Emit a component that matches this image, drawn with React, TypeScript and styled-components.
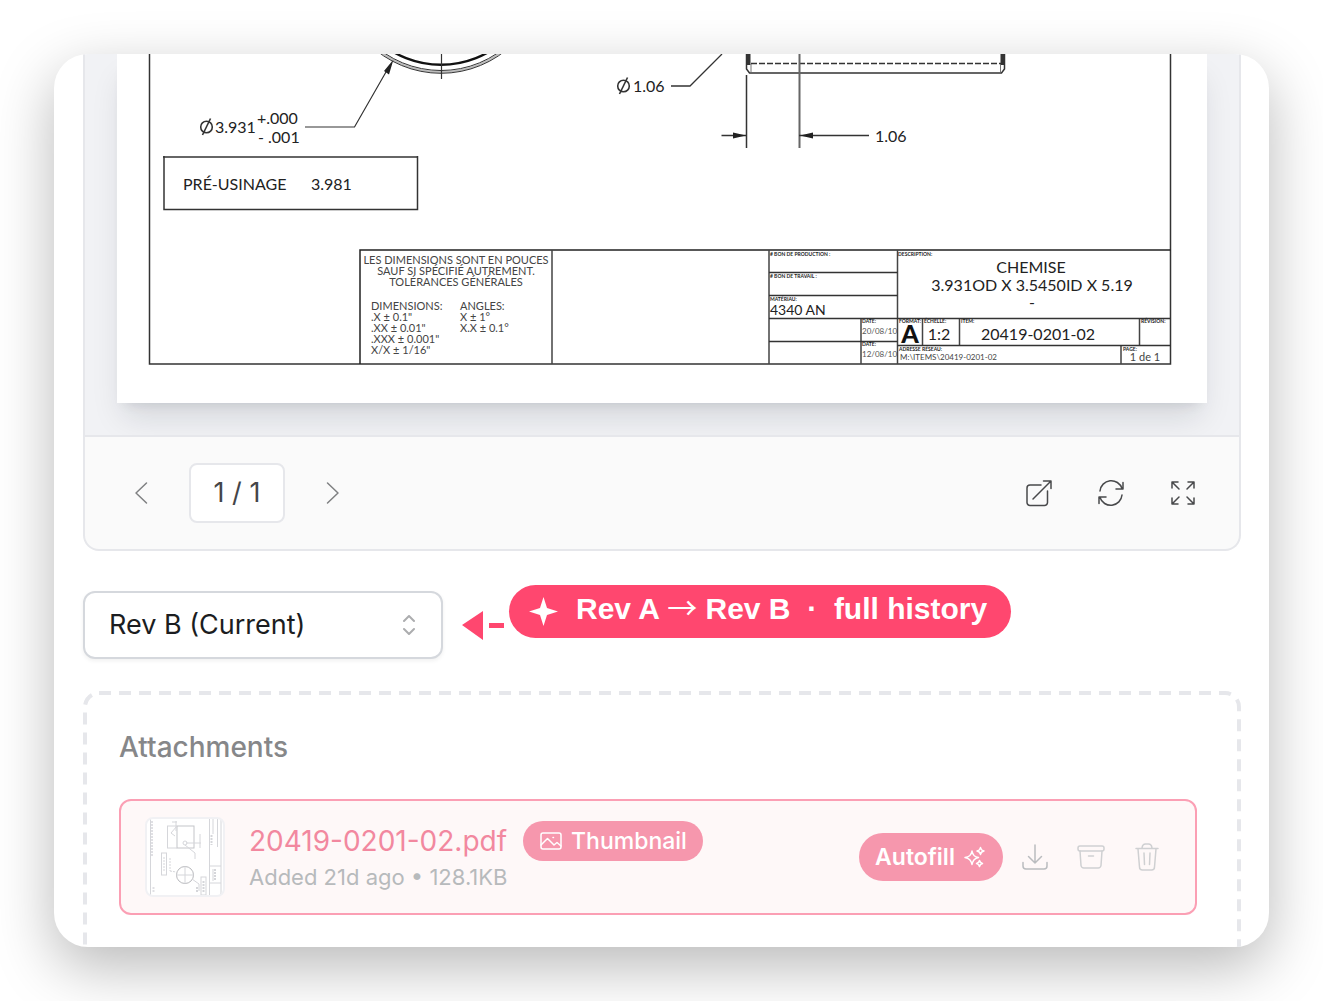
import React from "react";
import styled, { createGlobalStyle } from "styled-components";

const GlobalStyle = createGlobalStyle`
  *, *::before, *::after { box-sizing: border-box; }
  body {
    margin: 0;
    background: #fff;
    font-family: Inter, "Open Sans", sans-serif;
    color: #1b1d21;
  }
  button, select { font: inherit; color: inherit; }
`;

const Page = styled.main`
  padding: 54px;
`;

const Card = styled.section`
  padding: 0 28px 0 29px;
  border-radius: 34px;
  background: #fff;
  box-shadow: 0 20px 60px rgba(0, 0, 0, 0.28);
  overflow: hidden;
`;

const Viewer = styled.section`
  border: 2px solid #e6e7eb;
  border-top: 0;
  border-radius: 0 0 16px 16px;
  background: #fafafa;
  overflow: hidden;
`;

const Stage = styled.div`
  padding: 0 32px 32px;
  background: #f1f2f5;
  overflow: hidden;
`;

const Sheet = styled.svg`
  display: block;
  width: 100%;
  height: auto;
  background: #fff;
  box-shadow: 0 20px 30px -6px rgba(15, 23, 42, 0.12), 0 8px 12px -8px rgba(15, 23, 42, 0.12);
  font-family: Lato, "Open Sans", sans-serif;
  fill: #222;
`;

const Toolbar = styled.div`
  display: flex;
  align-items: center;
  justify-content: space-between;
  padding: 26px 32px;
  border-top: 2px solid #e6e7eb;
`;

const Group = styled.div<{ $gap: number }>`
  display: flex;
  align-items: center;
  gap: ${(p) => p.$gap}px;
`;

const IconButton = styled.button<{ $tone: string }>`
  display: grid;
  place-items: center;
  width: 48px;
  height: 48px;
  padding: 0;
  border: 0;
  background: none;
  color: ${(p) => p.$tone};
  cursor: pointer;
`;

const Icon = styled.svg`
  display: block;
  flex: none;
  fill: none;
  stroke: currentColor;
  stroke-width: 2;
  stroke-linecap: round;
  stroke-linejoin: round;
`;

const ThinIcon = styled(Icon)`
  stroke-width: 1.5;
`;

const PageCount = styled.output`
  display: grid;
  place-items: center;
  width: 96px;
  height: 60px;
  border: 2px solid #e6e7eb;
  border-radius: 8px;
  background: #fff;
  color: #444548;
  font-size: 27px;
  line-height: 40px;
`;

const RevisionRow = styled.div`
  display: flex;
  align-items: center;
  margin: 40px 0 32px;
`;

const SelectWrap = styled.label`
  position: relative;
  width: 360px;
  color: #acadaf;
`;

const Select = styled.select`
  display: block;
  width: 100%;
  height: 68px;
  padding: 0 56px 0 24px;
  border: 2px solid #d5d8dd;
  border-radius: 12px;
  appearance: none;
  background: #fff;
  box-shadow: 0 2px 4px rgba(0, 0, 0, 0.06);
  color: #1b1d21;
  font-size: 27px;
  line-height: 40px;
`;

const SelectIcon = styled(Icon)`
  position: absolute;
  top: 24px;
  right: 26px;
  pointer-events: none;
`;

const CalloutArrow = styled.svg`
  display: block;
  margin: 0 5px 0 19px;
  fill: #ff476f;
`;

const Callout = styled.p`
  display: flex;
  align-self: flex-start;
  align-items: center;
  gap: 18px;
  height: 53px;
  margin: -6px 0 0;
  padding: 0 24px 0 20px;
  border-radius: 27px;
  background: #ff476f;
  color: #fff;
  font: bold 30px/48px "Liberation Sans", "DejaVu Sans", sans-serif;
  white-space: pre;
`;

const CalloutText = styled.span`
  height: 53px;
`;

const LongArrow = styled.span`
  font-family: "Noto Sans CJK JP", sans-serif;
  font-weight: 400;
  line-height: 1;
`;

const Attachments = styled.section`
  position: relative;
  padding: 36px 44px 32px 36px;
  overflow: hidden;
`;

const DashedOutline = styled.svg`
  position: absolute;
  inset: 0;
  width: 100%;
  height: 100%;
  overflow: visible;
  pointer-events: none;

  rect {
    width: calc(100% - 4px);
    height: calc(100% + 32px);
    fill: none;
    stroke: #e6e7eb;
    stroke-width: 4;
    stroke-dasharray: 12 8;
  }
`;

const Heading = styled.h2`
  margin: 0 0 32px;
  color: #868789;
  font-size: 28px;
  font-weight: 500;
  line-height: 40px;
`;

const FileRow = styled.article`
  display: flex;
  align-items: center;
  gap: 24px;
  padding: 16px 24px;
  border: 2px solid #fb9fb4;
  border-radius: 12px;
  background: #fef8f8;
`;

const Thumb = styled.svg`
  display: block;
  flex: none;
  width: 80px;
  height: 80px;
  border: 2px solid #f1f1f4;
  border-radius: 8px;
  background: #fff;
`;

const FileText = styled.div`
  flex: 1;
  min-width: 0;
`;

const FileLink = styled.a`
  color: #f2889f;
  font-size: 28px;
  line-height: 40px;
  text-decoration: none;
`;

const FileMeta = styled.p`
  margin: 0;
  color: #b7babc;
  font-size: 22px;
  line-height: 32px;
`;

const Badge = styled.span`
  display: inline-flex;
  align-items: center;
  gap: 8px;
  height: 40px;
  padding: 0 16px;
  border-radius: 20px;
  background: #f697ad;
  color: #fff;
  font-size: 23px;
  font-weight: 500;
`;

const AutofillButton = styled.button`
  display: flex;
  align-items: center;
  justify-content: center;
  gap: 8px;
  width: 144px;
  height: 48px;
  padding: 0;
  border: 0;
  border-radius: 24px;
  background: #f697ad;
  color: #fff;
  font-size: 23px;
  font-weight: 600;
  cursor: pointer;
`;

type Label = {
  x: number;
  y: number;
  size: number;
  text: string;
  anchor?: "middle";
  fill?: string;
  weight?: number;
};

const labels: Label[] = [
  { x: 215, y: 133, size: 16, text: "3.931" },
  { x: 257, y: 124, size: 16, text: "+.000" },
  { x: 258, y: 143, size: 16, text: "- .001" },
  { x: 183, y: 190, size: 16, text: "PRÉ-USINAGE" },
  { x: 311, y: 190, size: 16, text: "3.981" },
  { x: 633, y: 92, size: 16, text: "1.06" },
  { x: 875, y: 142, size: 16, text: "1.06" },
  { x: 456, y: 264, size: 11, text: "LES DIMENSIONS SONT EN POUCES", anchor: "middle", fill: "#444" },
  { x: 456, y: 275, size: 11, text: "SAUF SI SPÉCIFIÉ AUTREMENT.", anchor: "middle", fill: "#444" },
  { x: 456, y: 286, size: 11, text: "TOLÉRANCES GÉNÉRALES", anchor: "middle", fill: "#444" },
  { x: 371, y: 310, size: 11, text: "DIMENSIONS:", fill: "#444" },
  { x: 371, y: 321, size: 11, text: ".X ± 0.1\"", fill: "#444" },
  { x: 371, y: 332, size: 11, text: ".XX ± 0.01\"", fill: "#444" },
  { x: 371, y: 343, size: 11, text: ".XXX ± 0.001\"", fill: "#444" },
  { x: 371, y: 354, size: 11, text: "X/X ± 1/16\"", fill: "#444" },
  { x: 460, y: 310, size: 11, text: "ANGLES:", fill: "#444" },
  { x: 460, y: 321, size: 11, text: "X ± 1°", fill: "#444" },
  { x: 460, y: 332, size: 11, text: "X.X ± 0.1°", fill: "#444" },
  { x: 770, y: 256, size: 5, text: "# BON DE PRODUCTION :", weight: 700 },
  { x: 770, y: 278, size: 5, text: "# BON DE TRAVAIL :", weight: 700 },
  { x: 770, y: 301, size: 5, text: "MATÉRIAU:", weight: 700 },
  { x: 770, y: 315, size: 14, text: "4340 AN" },
  { x: 898, y: 256, size: 5, text: "DESCRIPTION:", weight: 700 },
  { x: 1031, y: 273, size: 16, text: "CHEMISE", anchor: "middle" },
  { x: 1032, y: 291, size: 16, text: "3.931OD X 3.5450ID X 5.19", anchor: "middle" },
  { x: 1032, y: 308, size: 16, text: "-", anchor: "middle" },
  { x: 862, y: 323, size: 5, text: "DATE:", weight: 700 },
  { x: 862, y: 334, size: 8, text: "20/08/10", fill: "#555" },
  { x: 862, y: 346, size: 5, text: "DATE:", weight: 700 },
  { x: 862, y: 357, size: 8, text: "12/08/10", fill: "#555" },
  { x: 899, y: 323, size: 5, text: "FORMAT:", weight: 700 },
  { x: 924, y: 323, size: 5, text: "ÉCHELLE:", weight: 700 },
  { x: 961, y: 323, size: 5, text: "ITEM:", weight: 700 },
  { x: 1141, y: 323, size: 5, text: "RÉVISION:", weight: 700 },
  { x: 939, y: 340, size: 16, text: "1:2", anchor: "middle" },
  { x: 1038, y: 340, size: 16, text: "20419-0201-02", anchor: "middle" },
  { x: 899, y: 351, size: 5, text: "ADRESSE RÉSEAU:", weight: 700 },
  { x: 900, y: 360, size: 8, text: "M:\\ITEMS\\20419-0201-02", fill: "#444" },
  { x: 1123, y: 351, size: 5, text: "PAGE:", weight: 700 },
  { x: 1145, y: 361, size: 11, text: "1 de 1", anchor: "middle", fill: "#444" },
];

/* Lower part of the drawing sheet: the rest is scrolled out above it. */
function DrawingSheet() {
  return (
    <Sheet viewBox="117 54 1090 349" role="img" aria-label="Technical drawing 20419-0201-02">
      <g fill="none" stroke="#333" strokeWidth="1.5">
        <path d="M149.5 54V364H1170.5V54" />
        <circle cx="441" cy="-30" r="102" stroke="#bcbcbc" strokeWidth="2" />
        <circle cx="441" cy="-30" r="103.3" strokeWidth="1" />
        <circle cx="441" cy="-30" r="100.5" strokeWidth="1" />
        <circle cx="441" cy="-30" r="94.8" stroke="#111" strokeWidth="2.4" />
        <path d="M441.5 54V79" strokeWidth="1.2" />
        <path d="M305 127H354.5L390 65" strokeWidth="1.2" />
        <path d="M163 157H418" stroke="#666" strokeWidth="2" />
        <path d="M164 156V209.5H417.5V156" />
        <circle cx="206.5" cy="127" r="5.8" strokeWidth="1.6" />
        <path d="M202.5 135L210.500 118.500" strokeWidth="1.6" />
        <circle cx="623.5" cy="86" r="5.8" strokeWidth="1.6" />
        <path d="M619.500 94L627.500 77.500" strokeWidth="1.6" />
        <path d="M671 86H690L722 54" strokeWidth="1.3" />
        <path d="M746.500 54V69L749.500 73H1001.500L1004.500 69V54" />
        <path d="M748.500 54V65M1002.500 54V65" strokeWidth="4" />
        <path d="M751 64V72M1000.500 64V72" strokeWidth="1" stroke="#777" />
        <path d="M751 63.500H1001" strokeDasharray="6 2" />
        <path d="M746.500 75V148" />
        <path d="M799.500 54V148" stroke="#666" strokeWidth="2" />
        <path d="M721.500 135.500H746M799 135.500H869" strokeWidth="1.3" />
        <path d="M360 364V250H1170.500" stroke="#222" />
        <path d="M552 250V364M769 250V364M897.500 250V364M861 318V364M922.500 318V345.500M959.500 318V345.500M1139.500 318V345.500M1121 345.500V364" stroke="#444" />
        <path d="M769 272.500H897.500M769 295.500H897.500M769 318.500H1170.500M769 341.500H897.500M897.500 345.500H1170.500" stroke="#333" />
      </g>
      <path d="M393.500 59.500L384 71L389 74.500ZM746 135.500L733 132.500V138.500ZM800 135.500L813 132.500V138.500Z" />
      {labels.map((l, i) => (
        <text key={i} x={l.x} y={l.y} fontSize={l.size} textAnchor={l.anchor} fill={l.fill} fontWeight={l.weight}>
          {l.text}
        </text>
      ))}
      <text x="910" y="343" fontSize="25" fontWeight="900" textAnchor="middle" fill="#111">
        A
      </text>
    </Sheet>
  );
}

function ThumbnailDrawing() {
  return (
    <Thumb viewBox="0 0 76 76" role="img" aria-label="Drawing thumbnail">
      <g fill="none" stroke="#d5d6da" strokeWidth="1">
        <path d="M3.500 0V76M74 0V76M62.500 0V76M70.500 0V28M62.500 47H74M62.500 64H74M66 0V15M66 50V62" />
        <path d="M5 2V38M6.500 68V74" strokeDasharray="2 1" strokeWidth="2" stroke="#e0e0e4" />
        <rect x="30" y="7" width="17" height="22" stroke="#c4c5c9" />
        <path d="M29 2V12M25 3H30M20.500 7V29M20 7H30M20 29H30M30 7L24 14L28 17M39 24H54M53 15V29M38 26L48 34V40" />
        <circle cx="38" cy="24" r="2" />
        <rect x="14.500" y="34" width="5" height="22" />
        <path d="M17 38V53M23 39V52M23 52L29 53" strokeDasharray="2 1" />
        <circle cx="38" cy="56" r="8.500" stroke="#b8b9bd" />
        <path d="M38 47V65M29 56H47M45 60L52 65V72" />
        <rect x="54" y="58" width="5" height="18" />
        <path d="M56.500 62V74M50 68V74M64.500 16V26M68 50V62" strokeDasharray="2 1" strokeWidth="2" />
      </g>
    </Thumb>
  );
}

export default function App() {
  return (
    <>
      <GlobalStyle />
      <Page>
        <Card>
          <Viewer>
            <Stage>
              <DrawingSheet />
            </Stage>
            <Toolbar>
              <Group $gap={24}>
                <IconButton $tone="#7f8082" aria-label="Previous page">
                  <ThinIcon width="28" height="28">
                    <path d="M19.500 4L9 14L19.500 24" />
                  </ThinIcon>
                </IconButton>
                <PageCount>1 / 1</PageCount>
                <IconButton $tone="#7f8082" aria-label="Next page">
                  <ThinIcon width="28" height="28">
                    <path d="M8.500 4L19 14L8.500 24" />
                  </ThinIcon>
                </IconButton>
              </Group>
              <Group $gap={24}>
                <IconButton $tone="#48494b" aria-label="Open in new tab">
                  <ThinIcon width="28" height="28">
                    <path d="M16 6H5a3 3 0 0 0-3 3V23.500a3 3 0 0 0 3 3H19.500a3 3 0 0 0 3-3V12M8 20L26 2M18.500 2H26V9.500" />
                  </ThinIcon>
                </IconButton>
                <IconButton $tone="#48494b" aria-label="Refresh">
                  <ThinIcon width="28" height="28">
                    <path d="M3 12A11.300 11.300 0 0 1 25 9.500M26 3.500V10H19M25 16A11.300 11.300 0 0 1 3 18.500M2 24.500V18H9" />
                  </ThinIcon>
                </IconButton>
                <IconButton $tone="#48494b" aria-label="Full screen">
                  <ThinIcon width="28" height="28">
                    <path d="M3 9V3H9M3 3L10 10M19 3H25V9M25 3L18 10M3 19V25H9M3 25L10 18M25 19V25H19M25 25L18 18" />
                  </ThinIcon>
                </IconButton>
              </Group>
            </Toolbar>
          </Viewer>

          <RevisionRow>
            <SelectWrap>
              <Select aria-label="Revision" defaultValue="b">
                <option value="b">Rev B (Current)</option>
                <option value="a">Rev A</option>
              </Select>
              <SelectIcon width="16" height="20">
                <path d="M3 6L8 1L13 6M3 14L8 19L13 14" />
              </SelectIcon>
            </SelectWrap>
            <CalloutArrow width="42" height="30" aria-hidden="true">
              <path d="M0 15L21 1V30ZM27 13H42V18H27Z" />
            </CalloutArrow>
            <Callout>
              <svg width="29" height="29" viewBox="0 0 29 29" fill="#fff" aria-hidden="true">
                <path d="M14.500 0L18 11L29 14.500L18 18L14.500 29L11 18L0 14.500L11 11Z" />
              </svg>
              <CalloutText>
                Rev A <LongArrow>→</LongArrow> Rev B{"  "}·{"  "}full history
              </CalloutText>
            </Callout>
          </RevisionRow>

          <Attachments>
            <DashedOutline aria-hidden="true">
              <rect x="2" y="2" rx="14" />
            </DashedOutline>
            <Heading>Attachments</Heading>
            <FileRow>
              <ThumbnailDrawing />
              <FileText>
                <Group $gap={16}>
                  <FileLink href="#file">20419-0201-02.pdf</FileLink>
                  <Badge>
                    <ThinIcon width="24" height="20">
                      <rect x="2" y="2" width="20" height="16" rx="2" />
                      <path d="M2 14L8.500 7.500L15 14L18 11.500L22 15M14 6.500H14.500" />
                    </ThinIcon>
                    Thumbnail
                  </Badge>
                </Group>
                <FileMeta>Added 21d ago • 128.1KB</FileMeta>
              </FileText>
              <Group $gap={8}>
                <AutofillButton>
                  Autofill
                  <ThinIcon width="24" height="24">
                    <path d="M9 6Q10 12 15.500 12.500Q10 13.500 9 19.500Q8 13.500 2 12.500Q8 12 9 6ZM17.500 2.500Q18 5.500 21 6Q18 6.500 17.500 9.500Q17 6.500 14 6Q17 5.500 17.500 2.500ZM16.500 15.500Q17 18 19.500 18.500Q17 19 16.500 21.500Q16 19 13.500 18.500Q16 18 16.500 15.500Z" />
                  </ThinIcon>
                </AutofillButton>
                <IconButton $tone="#babcbf" aria-label="Download">
                  <ThinIcon width="28" height="28">
                    <path d="M14 2V20M7.500 13.500L14 20L20.500 13.500M2 19.500V23a3 3 0 0 0 3 3H23a3 3 0 0 0 3-3V19.500" />
                  </ThinIcon>
                </IconButton>
                <IconButton $tone="#cfd0d2" aria-label="Archive">
                  <ThinIcon width="28" height="28">
                    <rect x="1" y="3" width="26" height="5" rx="2" />
                    <path d="M3 8L4 22.500a3 3 0 0 0 3 2.500H21a3 3 0 0 0 3-2.500L25 8M11.500 13H16.500" />
                  </ThinIcon>
                </IconButton>
                <IconButton $tone="#cfd0d2" aria-label="Delete">
                  <ThinIcon width="28" height="28">
                    <path d="M3 5.500H25M9 5Q9.500 1 12.500 1H15.500Q18.500 1 19 5M5 6L6.500 24a3 3 0 0 0 3 3H18.500a3 3 0 0 0 3-3L23 6M11 10L11.500 21.500M17 10L16.500 21.500" />
                  </ThinIcon>
                </IconButton>
              </Group>
            </FileRow>
          </Attachments>
        </Card>
      </Page>
    </>
  );
}
